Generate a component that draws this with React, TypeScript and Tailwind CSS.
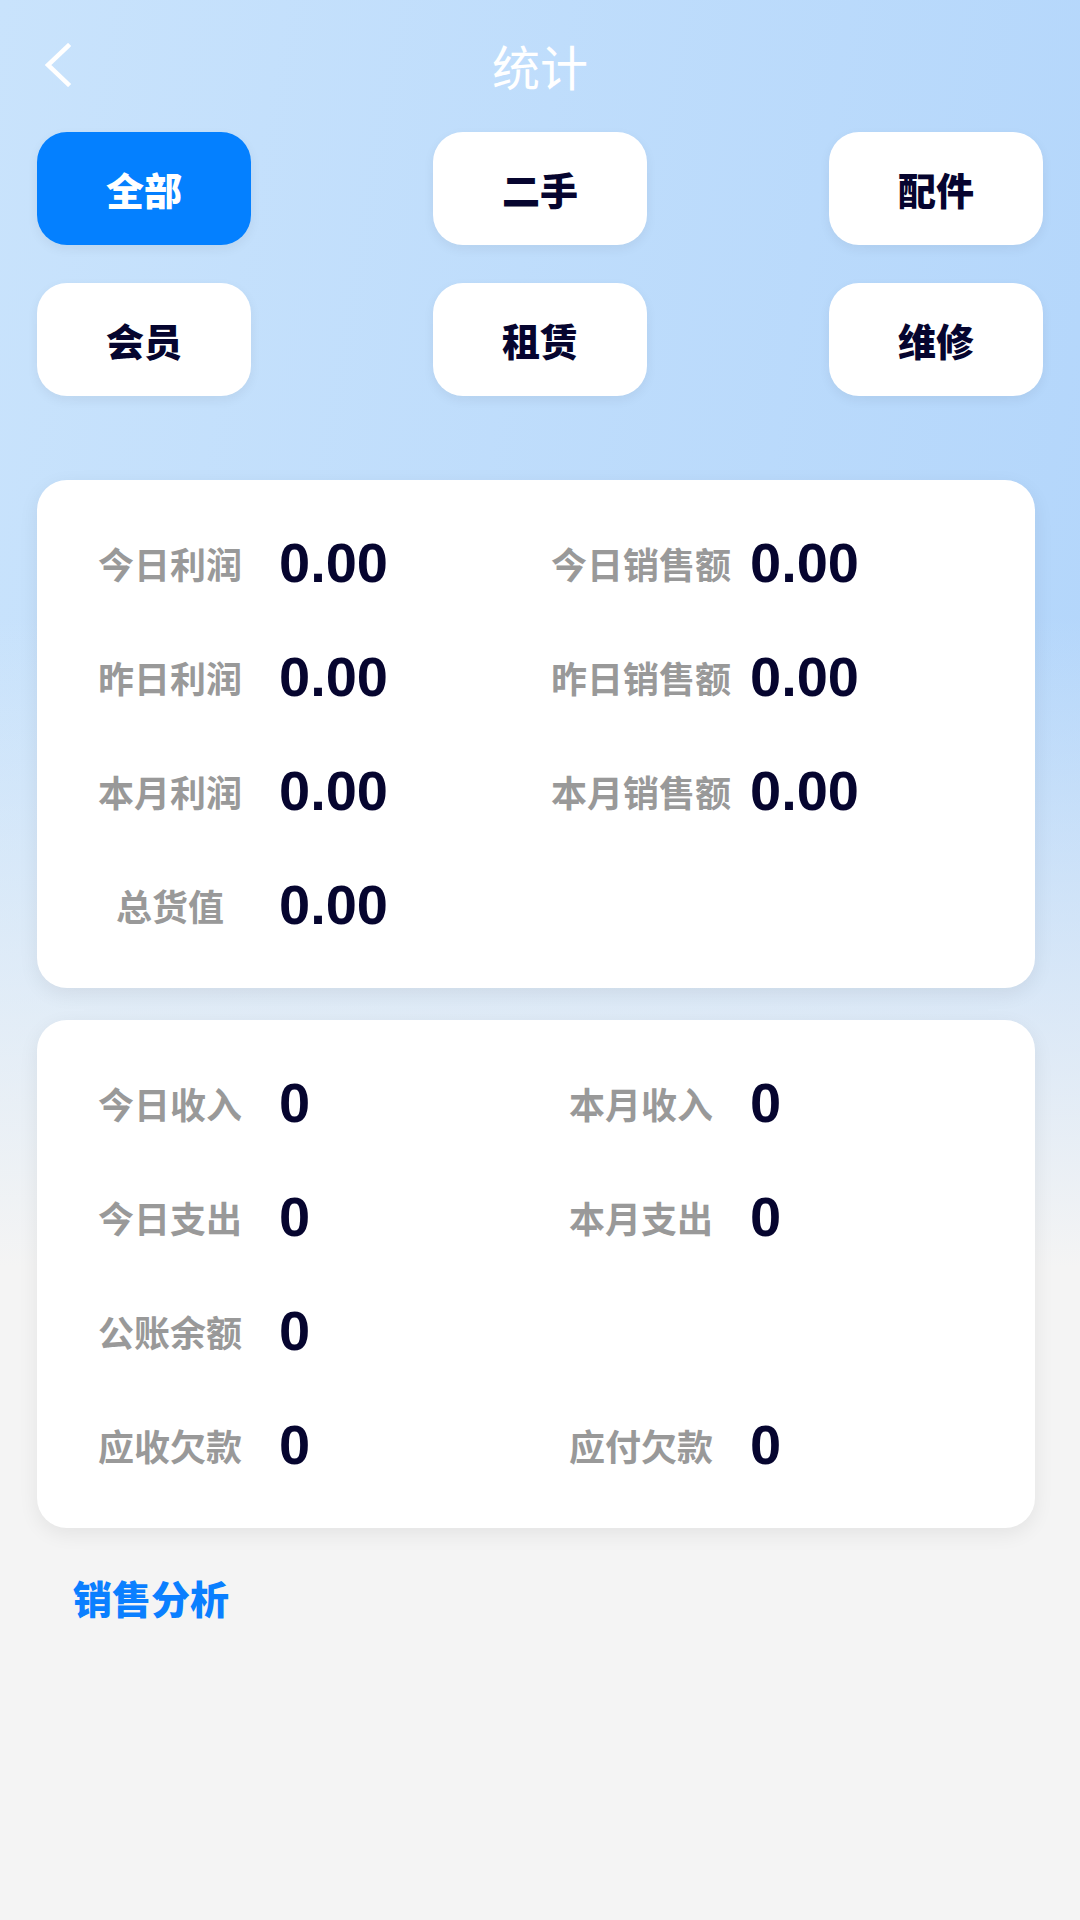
import React, { useState } from "react";

const tabs = ["全部", "二手", "配件", "会员", "租赁", "维修"];

type Item = { label: string; value: string } | null;

const salesRows: [Item, Item][] = [
  [{ label: "今日利润", value: "0.00" }, { label: "今日销售额", value: "0.00" }],
  [{ label: "昨日利润", value: "0.00" }, { label: "昨日销售额", value: "0.00" }],
  [{ label: "本月利润", value: "0.00" }, { label: "本月销售额", value: "0.00" }],
  [{ label: "总货值", value: "0.00" }, null],
];

const cashRows: [Item, Item][] = [
  [{ label: "今日收入", value: "0" }, { label: "本月收入", value: "0" }],
  [{ label: "今日支出", value: "0" }, { label: "本月支出", value: "0" }],
  [{ label: "公账余额", value: "0" }, null],
  [{ label: "应收欠款", value: "0" }, { label: "应付欠款", value: "0" }],
];

function Cell({ item }: { item: Item }) {
  if (!item) return <div className="w-[471px]" />;
  return (
    <div className="flex w-[471px] items-center">
      <span className="w-[190px] text-center text-[36px] font-bold leading-none text-[#999999]">
        {item.label}
      </span>
      <span className="ml-[14px] font-['Liberation_Sans',sans-serif] text-[56px] font-bold leading-none text-[#06052f]">
        {item.value}
      </span>
    </div>
  );
}

function StatCard({ rows }: { rows: [Item, Item][] }) {
  return (
    <div className="w-[998px] rounded-[30px] bg-white pt-[26px] pb-[26px] pl-[38px] shadow-[0_6px_20px_rgba(0,0,0,0.07)]">
      {rows.map((row, i) => (
        <div key={i} className="flex h-[114px] items-center">
          <Cell item={row[0]} />
          <Cell item={row[1]} />
        </div>
      ))}
    </div>
  );
}

export default function App() {
  const [active, setActive] = useState(0);

  return (
    <div className="min-h-[1920px] w-full bg-[linear-gradient(180deg,rgba(244,244,244,0)_0%,rgba(244,244,244,0)_32%,#f4f4f4_66%),linear-gradient(100deg,#c9e3fc_0%,#b0d4fb_100%)] font-['Noto_Sans_CJK_SC',sans-serif]">
      {/* header */}
      <div className="grid h-[132px] grid-cols-[1fr_auto_1fr] items-center px-[40px] pb-[2px]">
        <button className="flex h-[60px] w-[40px] items-center justify-start pl-[4px]">
          <svg width="28" height="44" viewBox="0 0 28 44" fill="none">
            <path d="M24 3 L4 22 L24 41" stroke="white" strokeWidth="4.5" strokeLinecap="square" strokeLinejoin="miter" />
          </svg>
        </button>
        <h1 className="text-[48px] font-normal leading-none text-white">统计</h1>
        <div />
      </div>

      {/* tabs */}
      <div className="grid grid-cols-[214px_214px_214px] justify-between gap-y-[38px] pl-[37px] pr-[37px]">
        {tabs.map((t, i) => (
          <button
            key={t}
            onClick={() => setActive(i)}
            className={
              i === active
                ? "flex h-[113px] items-center justify-center rounded-[30px] bg-[#0480ff] text-[38px] font-black text-white shadow-[0_4px_12px_rgba(0,0,0,0.06)]"
                : "flex h-[113px] items-center justify-center rounded-[30px] bg-white text-[38px] font-black text-[#06052f] shadow-[0_4px_12px_rgba(0,0,0,0.06)]"
            }
          >
            {t}
          </button>
        ))}
      </div>

      {/* stat cards */}
      <div className="mt-[84px] flex flex-col gap-[32px] pl-[37px]">
        <StatCard rows={salesRows} />
        <StatCard rows={cashRows} />
      </div>

      <div className="mt-[50px] pl-[73px] text-[39px] font-black leading-none text-[#0a7fff]">销售分析</div>
    </div>
  );
}
